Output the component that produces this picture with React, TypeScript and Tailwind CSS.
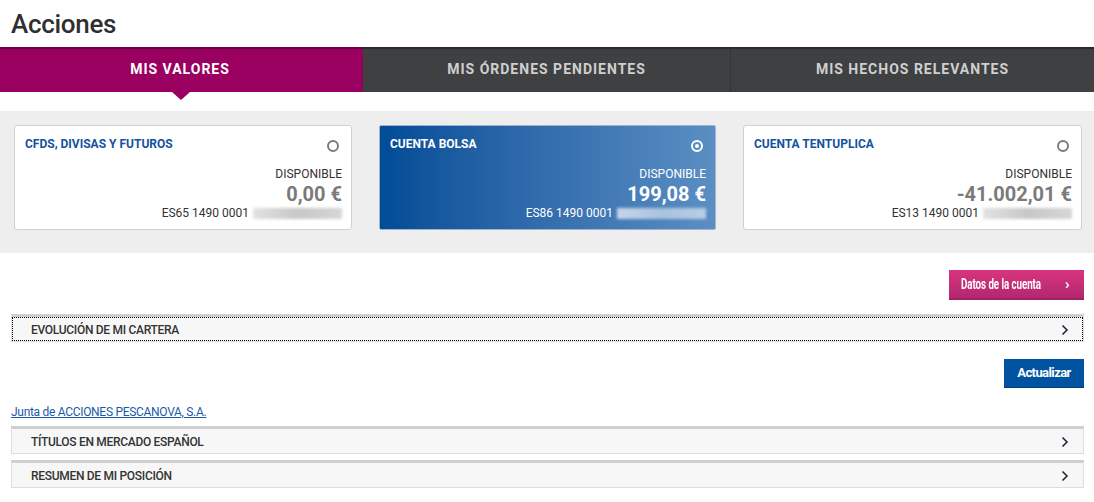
import React from "react";

const font = { fontFamily: "Roboto, 'Liberation Sans', sans-serif" };

function Radio({ selected }: { selected?: boolean }) {
  if (selected) {
    return (
      <span className="block shrink-0 w-[12px] h-[12px] rounded-full border-2 border-white flex items-center justify-center">
        <span className="block w-[4px] h-[4px] rounded-full bg-white" />
      </span>
    );
  }
  return <span className="block shrink-0 w-[12px] h-[12px] rounded-full border-2 border-[#7b7b7b] bg-white" />;
}

function Card({
  title,
  amount,
  iban,
  selected,
}: {
  title: string;
  amount: string;
  iban: string;
  selected?: boolean;
}) {
  return (
    <div
      className={
        selected
          ? "rounded-[2px] border border-[#9fb3cc] bg-gradient-to-r from-[#004c97] to-[#5b8fc3] pt-[11px] pb-[9px] pl-[10px] pr-[9px] flex flex-col"
          : "rounded-[3px] border border-[#d0d0d0] bg-white pt-[11px] pb-[9px] pl-[10px] pr-[9px] flex flex-col"
      }
    >
      <div className="flex justify-between items-start h-[16px]">
        <span
          className={
            "text-[12px] font-bold leading-[14px] " +
            (selected ? "text-white" : "text-[#1552a0]")
          }
        >
          {title}
        </span>
        <span className="block mt-[3px] mr-[3px]">
          <Radio selected={selected} />
        </span>
      </div>
      <div className="flex flex-col items-end">
        <span
          className={
            "mt-[14px] text-[12px] leading-[14px] " + (selected ? "text-white" : "text-[#333]")
          }
        >
          DISPONIBLE
        </span>
        <span
          className={
            "mt-[2px] text-[20px] font-bold leading-[22px] " +
            (selected ? "text-white" : "text-[#7a7a7a]")
          }
        >
          {amount}
        </span>
        <span
          className={
            "mt-[1px] flex items-center text-[12px] leading-[14px] " +
            (selected ? "text-white" : "text-[#333]")
          }
        >
          {iban}
          <span
            className={
              "ml-[4px] inline-block w-[89px] h-[11px] blur-[1.5px] " +
              (selected
                ? "bg-gradient-to-r from-[#c7d7ea] via-[#a9c2de] to-[#b8cde6]"
                : "bg-gradient-to-r from-[#e2e2e2] via-[#c7c7c7] to-[#d6d6d6]")
            }
          />
        </span>
      </div>
    </div>
  );
}

function Chevron() {
  return (
    <svg width="8" height="12" viewBox="0 0 8 12" fill="none">
      <path d="M1.5 1.5 L6 6 L1.5 10.5" stroke="#1d2a3a" strokeWidth="1.6" />
    </svg>
  );
}

function Accordion({ label, focused }: { label: string; focused?: boolean }) {
  return (
    <div className="border-t-[3px] border-t-[#cfcfcf] border-x border-b border-[#dedede] bg-[#f7f7f7]">
      <div
        className={
          "h-[24px] pt-[2px] flex items-center justify-between pl-[19px] pr-[14px] " +
          (focused ? "outline-1 outline-dotted outline-black -outline-offset-1" : "")
        }
      >
        <span className="text-[12px] font-medium text-[#333] tracking-[-0.3px]">{label}</span>
        <Chevron />
      </div>
    </div>
  );
}

export default function App() {
  return (
    <div className="w-[1094px] h-[502px] bg-white overflow-hidden" style={font}>
      <div className="h-[47px] pl-[11px] flex items-start">
        <h1 className="text-[26px] leading-[30px] mt-[9px] text-[#2f2f2f] font-medium tracking-[-0.3px]">
          Acciones
        </h1>
      </div>

      <div className="relative h-[45px] flex bg-[#3f4042] shadow-[inset_0_2px_1px_rgba(0,0,0,0.35)]">
        <div className="relative w-[363px] bg-[#99005f] flex items-center justify-center shadow-[inset_0_2px_1px_rgba(0,0,0,0.3)]">
          <span className="text-white text-[14px] font-bold tracking-[1px] -ml-[3px]">MIS VALORES</span>
          <span className="absolute left-[172px] top-[45px] w-0 h-0 border-l-[9px] border-r-[9px] border-t-[8px] border-l-transparent border-r-transparent border-t-[#99005f]" />
        </div>
        <div className="w-[368px] flex items-center justify-center border-r border-[#333435]">
          <span className="text-[#cfcfcf] text-[14px] font-bold tracking-[1px]">MIS ÓRDENES PENDIENTES</span>
        </div>
        <div className="flex-1 flex items-center justify-center">
          <span className="text-[#cfcfcf] text-[14px] font-bold tracking-[1px]">MIS HECHOS RELEVANTES</span>
        </div>
      </div>

      <div className="mt-[19px] h-[142px] bg-[#eeeeee] pt-[14px] pl-[14px] pr-[11px] grid grid-cols-[338px_337px_339px] gap-x-[27px] items-start">
        <Card title="CFDS, DIVISAS Y FUTUROS" amount="0,00 €" iban="ES65 1490 0001" />
        <Card title="CUENTA BOLSA" amount="199,08 €" iban="ES86 1490 0001" selected />
        <Card title="CUENTA TENTUPLICA" amount="-41.002,01 €" iban="ES13 1490 0001" />
      </div>

      <div className="pl-[11px] pr-[10px]">
        <div className="mt-[17px] flex justify-end">
          <button className="h-[30px] w-[135px] bg-gradient-to-b from-[#d8357f] to-[#b3286f] border-b-2 border-[#a01f63] text-white flex items-center pl-[12px]">
            <span className="block w-[79px] overflow-visible whitespace-nowrap text-left">
              <span className="inline-block origin-left scale-x-[0.7] text-[14px] font-bold tracking-[-0.1px]">
                Datos de la cuenta
              </span>
            </span>
            <span className="ml-[25px] text-[15px] font-bold leading-none">›</span>
          </button>
        </div>

        <div className="mt-[14px]">
          <Accordion label="EVOLUCIÓN DE MI CARTERA" focused />
        </div>

        <div className="mt-[17px] flex justify-end">
          <button className="h-[29px] w-[80px] bg-[#0053a0] border-b border-[#003f7c] text-white text-[13px] font-bold tracking-[-0.6px]">
            Actualizar
          </button>
        </div>

        <div className="mt-[17px] h-[14px] flex items-center">
          <a className="text-[12px] leading-[14px] text-[#1a5aa8] underline tracking-[-0.3px]" href="#">
            Junta de ACCIONES PESCANOVA, S.A.
          </a>
        </div>

        <div className="mt-[7px]">
          <Accordion label="TÍTULOS EN MERCADO ESPAÑOL" />
        </div>
        <div className="mt-[6px]">
          <Accordion label="RESUMEN DE MI POSICIÓN" />
        </div>
      </div>
    </div>
  );
}
